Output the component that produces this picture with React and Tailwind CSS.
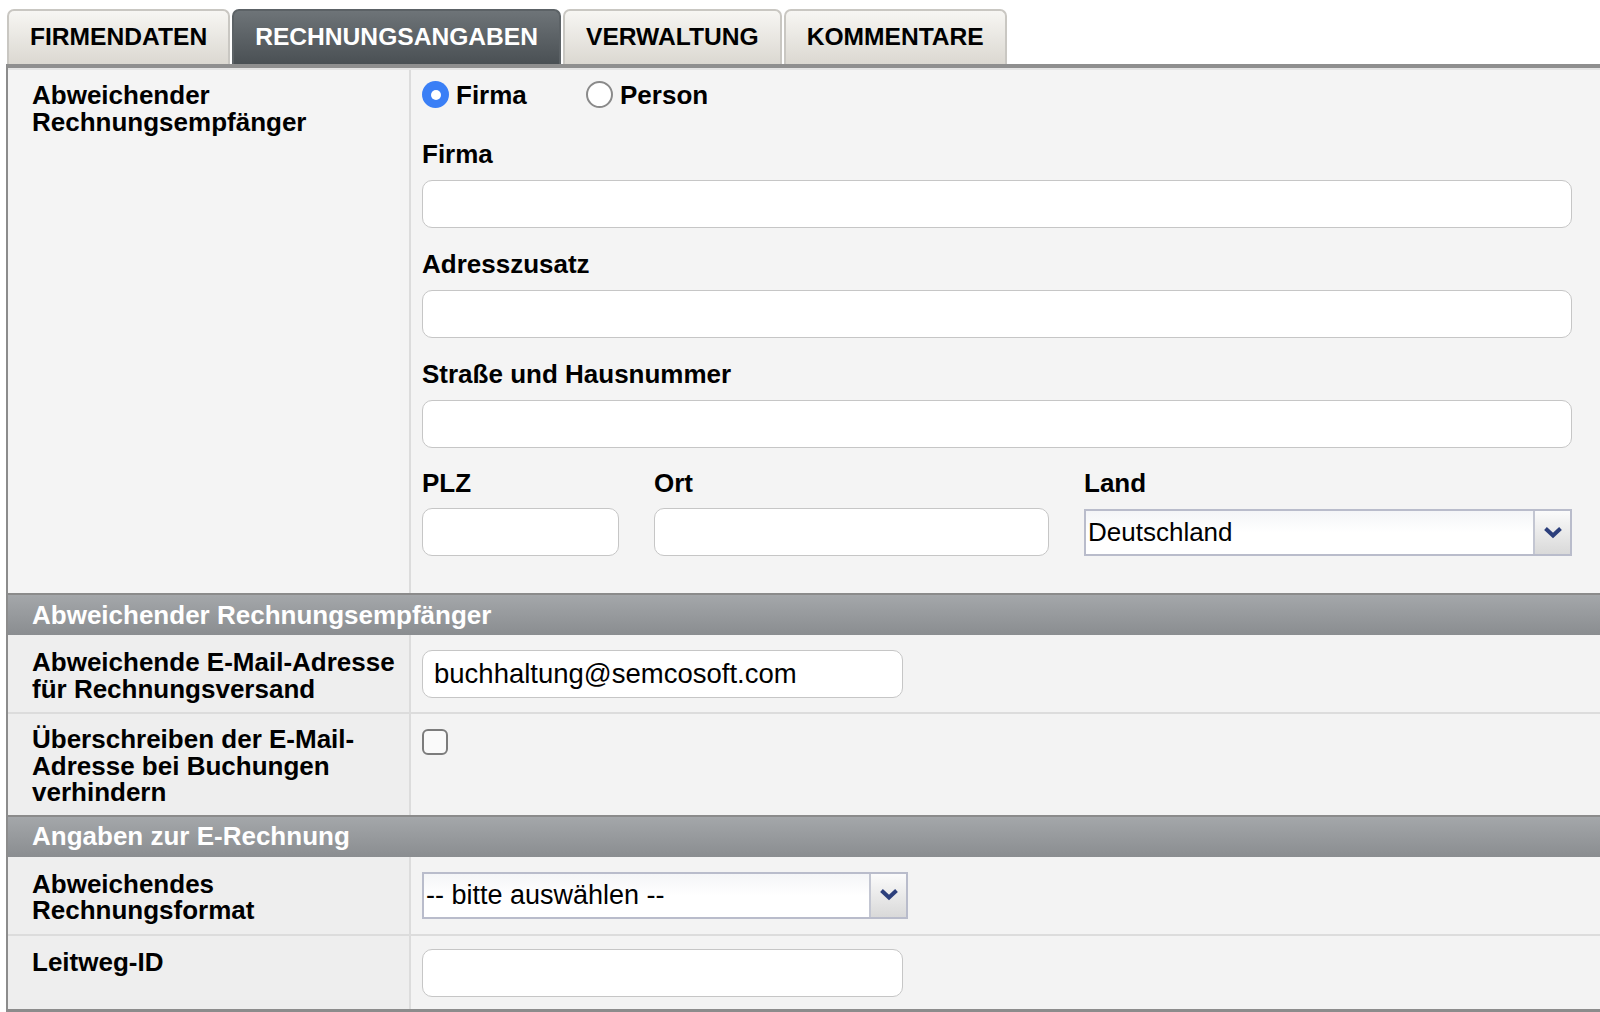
import { useState } from "react";

// Billing tab of a company record: tabs, address block, e-mail + e-invoice sections.

const TABS = ["FIRMENDATEN", "RECHNUNGSANGABEN", "VERWALTUNG", "KOMMENTARE"];

function TextInput({ value = "", className = "" }) {
  return (
    <input
      type="text"
      defaultValue={value}
      className={`h-[48px] rounded-[10px] border-[1.5px] border-[#c6c6c6] bg-white px-[11px] text-[27.5px] text-black outline-none ${className}`}
    />
  );
}

function SelectBox({ value, className = "", textSize = "text-[26px]" }) {
  return (
    <div className={`flex h-[47px] border-2 border-[#b9bccb] bg-gradient-to-b from-[#f4f5f7] via-white to-white ${className}`}>
      <div className={`flex flex-1 items-center pl-[2px] text-black ${textSize}`}>{value}</div>
      <div className="flex w-[37px] items-center justify-center border-l-2 border-[#c3c6d2] bg-gradient-to-b from-[#fbfbfb] to-[#d9d9d9]">
        <svg width="18" height="12" viewBox="0 0 18 12">
          <path d="M1.5 1.5 L9 8.5 L16.5 1.5" fill="none" stroke="#2c3f7c" strokeWidth="4" />
        </svg>
      </div>
    </div>
  );
}

function Radio({ checked, label, onClick, className = "" }) {
  return (
    <button onClick={onClick} className={`flex items-center gap-[7px] ${className}`}>
      {checked ? (
        <span className="flex h-[27px] w-[27px] items-center justify-center rounded-full bg-[#3a7ff6]">
          <span className="h-[10px] w-[10px] rounded-full bg-white" />
        </span>
      ) : (
        <span className="h-[27px] w-[27px] rounded-full border-[2.5px] border-[#8a8a8a] bg-white" />
      )}
      <span className="text-[26px] font-bold leading-[26px]">{label}</span>
    </button>
  );
}

function FieldLabel({ children }) {
  return <div className="text-[26px] font-bold leading-[26px]">{children}</div>;
}

function SectionHeader({ children }) {
  return (
    <div className="flex h-[42px] items-center border-t-2 border-[#8b8b8b] bg-gradient-to-b from-[#a4a7aa] to-[#8a8d90] pl-[24px] text-[26px] font-bold text-white">
      {children}
    </div>
  );
}

function Row({ label, children, labelPad = "pt-[14px]", valuePad = "pt-[15px] pb-[14px]", divider = true }) {
  return (
    <div className={`grid grid-cols-[403px_1fr] ${divider ? "border-b-2 border-[#dcdcdc]" : ""}`}>
      <div className={`border-r-2 border-[#dcdcdc] bg-[#eeeeee] pl-[24px] text-[26px] font-bold leading-[26.5px] ${labelPad}`}>
        {label}
      </div>
      <div className={`bg-[#f3f3f3] pl-[11px] ${valuePad}`}>{children}</div>
    </div>
  );
}

export default function App() {
  const [kind, setKind] = useState("firma");
  const [activeTab, setActiveTab] = useState(1);

  return (
    <div className="h-[1012px] w-[1600px] overflow-hidden bg-white font-['Liberation_Sans',Arial,sans-serif] text-black">
      {/* Tabs */}
      <div className="flex gap-[2px] pl-[7px] pt-[9px]">
        {TABS.map((t, i) => (
          <button
            key={t}
            onClick={() => setActiveTab(i)}
            className={`h-[55px] rounded-t-[7px] border-2 border-b-0 px-[21px] text-[24.6px] font-bold ${
              i === activeTab
                ? "border-[#5c6266] bg-gradient-to-b from-[#6e7478] to-[#4a5054] text-white"
                : "border-[#c9c7c2] bg-gradient-to-b from-[#f7f6f3] to-[#dbd8d1] text-black"
            }`}
          >
            {t}
          </button>
        ))}
      </div>

      {/* Content */}
      <div className="ml-[6px] border-b-4 border-l-2 border-t-4 border-[#8c8c8c] border-t-[#8f8f8f]">
        <div className="border-t-2 border-[#e4e4e4]" />

        {/* Address block */}
        <div className="grid grid-cols-[403px_1fr] bg-[#f4f4f4]">
          <div className="border-r-2 border-[#dcdcdc] pl-[24px] pt-[12px] text-[26px] font-bold leading-[26.5px]">
            Abweichender
            <br />
            Rechnungsempfänger
          </div>
          <div className="pb-[37px] pl-[11px] pr-[28px] pt-[11px]">
            <div className="flex items-center">
              <Radio checked={kind === "firma"} label="Firma" onClick={() => setKind("firma")} className="w-[164px]" />
              <Radio checked={kind === "person"} label="Person" onClick={() => setKind("person")} />
            </div>

            <div className="mt-[33px]">
              <FieldLabel>Firma</FieldLabel>
              <TextInput className="mt-[13px] w-full" />
            </div>
            <div className="mt-[23px]">
              <FieldLabel>Adresszusatz</FieldLabel>
              <TextInput className="mt-[13px] w-full" />
            </div>
            <div className="mt-[23px]">
              <FieldLabel>Straße und Hausnummer</FieldLabel>
              <TextInput className="mt-[13px] w-full" />
            </div>

            <div className="mt-[22px] grid grid-cols-[197px_395px_1fr] gap-x-[35px]">
              <div>
                <FieldLabel>PLZ</FieldLabel>
                <TextInput className="mt-[12px] w-full" />
              </div>
              <div>
                <FieldLabel>Ort</FieldLabel>
                <TextInput className="mt-[12px] w-full" />
              </div>
              <div>
                <FieldLabel>Land</FieldLabel>
                <SelectBox value="Deutschland" className="mt-[13px] w-full" />
              </div>
            </div>
          </div>
        </div>

        <SectionHeader>Abweichender Rechnungsempfänger</SectionHeader>

        <Row
          label={
            <>
              Abweichende E-Mail-Adresse
              <br />
              für Rechnungsversand
            </>
          }
        >
          <TextInput value="buchhaltung@semcosoft.com" className="w-[481px]" />
        </Row>

        <Row
          label={
            <>
              Überschreiben der E-Mail-
              <br />
              Adresse bei Buchungen
              <br />
              verhindern
            </>
          }
          labelPad="pt-[12px] pb-[9px]"
          valuePad="pt-[15px]"
          divider={false}
        >
          <span className="block h-[26px] w-[26px] rounded-[6px] border-[2.5px] border-[#7c7c7c] bg-[#fafafa]" />
        </Row>

        <SectionHeader>Angaben zur E-Rechnung</SectionHeader>

        <Row
          label={
            <>
              Abweichendes
              <br />
              Rechnungsformat
            </>
          }
          valuePad="pt-[15px] pb-[15px]"
        >
          <SelectBox value="-- bitte auswählen --" textSize="text-[27px]" className="w-[486px]" />
        </Row>

        <Row label="Leitweg-ID" labelPad="pt-[13px]" valuePad="pt-[13px] pb-[12px]" divider={false}>
          <TextInput className="w-[481px]" />
        </Row>
      </div>
    </div>
  );
}
